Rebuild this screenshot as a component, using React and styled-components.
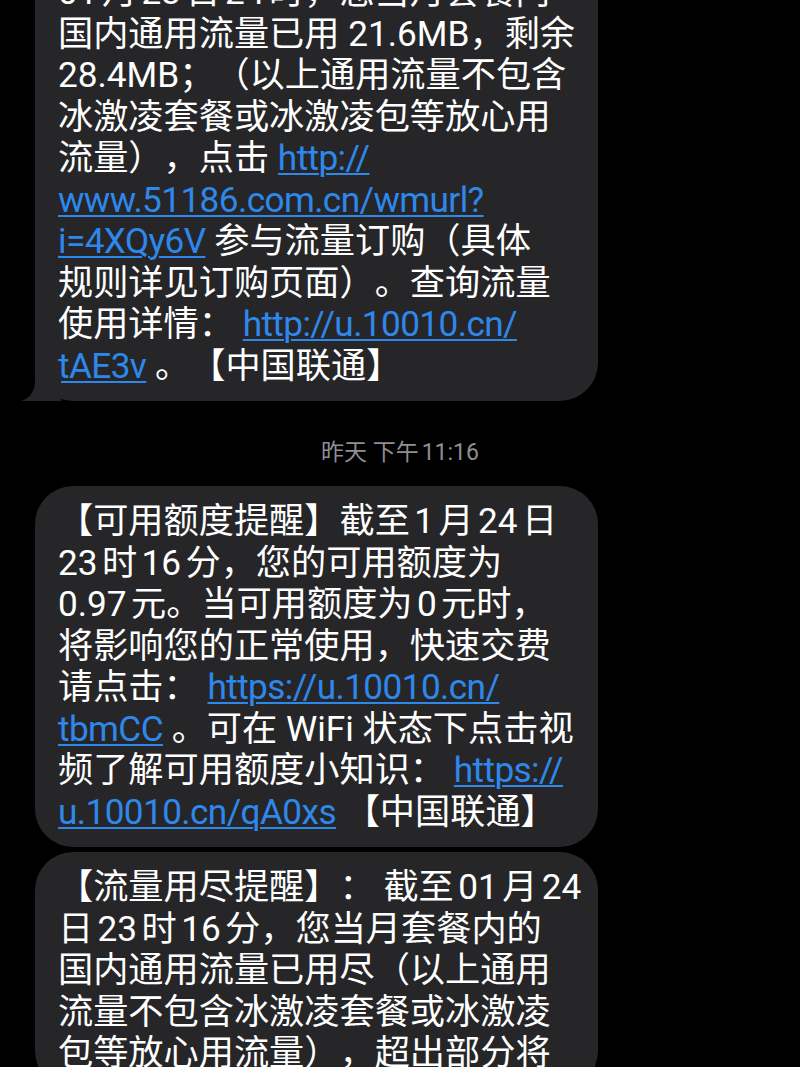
import React from 'react'
import styled, { createGlobalStyle } from 'styled-components'

const GlobalStyle = createGlobalStyle`
  html, body {
    margin: 0;
    padding: 0;
    background: #000;
  }
`

const Screen = styled.div`
  width: 800px;
  height: 1067px;
  overflow: hidden;
  background: #000;
  font-family: Roboto, "Noto Sans CJK SC", "Noto Sans", sans-serif;
  text-spacing-trim: space-all;
  text-autospace: normal;
`

const Thread = styled.div`
  display: flex;
  flex-direction: column;
  align-items: flex-start;
  gap: 5px;
  margin-top: -43px;
  padding-left: 35px;
`

const Bubble = styled.div`
  position: relative;
  box-sizing: border-box;
  width: 563px;
  padding: 15px 16px 14px 23px;
  background: #262628;
  border-radius: 38px;
  color: #fff;
  font-size: 35.2px;
  line-height: 41.5px;
  white-space: nowrap;
`

const Tail = styled.svg`
  position: absolute;
  left: -14px;
  bottom: 0;
  width: 40px;
  height: 40px;
`

const Link = styled.span`
  color: #2e88ec;
  letter-spacing: -0.6px;
  text-decoration: underline;
  text-decoration-thickness: 2px;
  text-underline-offset: 3px;
`

const Stamp = styled.div`
  align-self: stretch;
  margin-left: -35px;
  padding: 33px 0 14px;
  text-align: center;
  color: #8e8e93;
  font-size: 23px;
  line-height: 28px;
`

const Line = styled.div``

const BubbleTail = () => (
  <Tail viewBox="0 0 40 40">
    <path d="M14 0 L40 0 L40 40 L0 40 C7 38 14 32 14 20 Z" fill="#262628" />
  </Tail>
)

export default function App() {
  return (
    <Screen>
      <GlobalStyle />
      <Thread>
        <Bubble>
          <Line>01月23日24时，您当月套餐内</Line>
          <Line>国内通用流量已用 21.6MB，剩余</Line>
          <Line>28.4MB；（以上通用流量不包含</Line>
          <Line>冰激凌套餐或冰激凌包等放心用</Line>
          <Line>流量），点击 <Link>http://</Link></Line>
          <Line><Link>www.51186.com.cn/wmurl?</Link></Line>
          <Line><Link>i=4XQy6V</Link> 参与流量订购（具体</Line>
          <Line>规则详见订购页面）。查询流量</Line>
          <Line>使用详情： <Link>http://u.10010.cn/</Link></Line>
          <Line><Link>tAE3v</Link> 。【中国联通】</Line>
          <BubbleTail />
        </Bubble>

        <Stamp>昨天 下午11:16</Stamp>

        <Bubble>
          <Line>【可用额度提醒】截至1月24日</Line>
          <Line>23时16分，您的可用额度为</Line>
          <Line>0.97元。当可用额度为0元时，</Line>
          <Line>将影响您的正常使用，快速交费</Line>
          <Line>请点击： <Link>https://u.10010.cn/</Link></Line>
          <Line><Link>tbmCC</Link> 。可在 WiFi 状态下点击视</Line>
          <Line>频了解可用额度小知识： <Link>https://</Link></Line>
          <Line><Link>u.10010.cn/qA0xs</Link> 【中国联通】</Line>
        </Bubble>

        <Bubble>
          <Line>【流量用尽提醒】： 截至01月24</Line>
          <Line>日23时16分，您当月套餐内的</Line>
          <Line>国内通用流量已用尽（以上通用</Line>
          <Line>流量不包含冰激凌套餐或冰激凌</Line>
          <Line>包等放心用流量），超出部分将</Line>
        </Bubble>
      </Thread>
    </Screen>
  )
}
